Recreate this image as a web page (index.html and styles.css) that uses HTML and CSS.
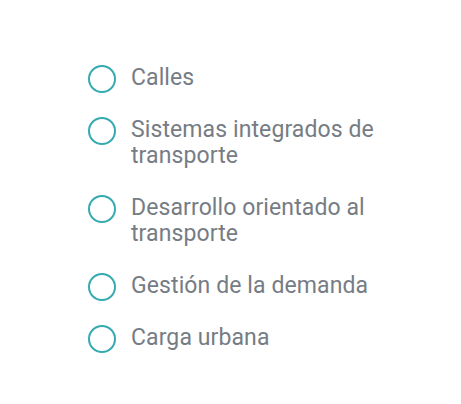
FILE: index.html
```html
<!DOCTYPE html>
<html lang="es">
<head>
<meta charset="utf-8">
<link rel="stylesheet" href="styles.css">
</head>
<body>
<ul class="options">
  <li class="option"><span class="radio"></span><span class="label">Calles</span></li>
  <li class="option"><span class="radio"></span><span class="label">Sistemas integrados de transporte</span></li>
  <li class="option"><span class="radio"></span><span class="label">Desarrollo orientado al transporte</span></li>
  <li class="option"><span class="radio"></span><span class="label">Gestión de la demanda</span></li>
  <li class="option"><span class="radio"></span><span class="label">Carga urbana</span></li>
</ul>
</body>
</html>
```
FILE: styles.css
```css
html, body {
  margin: 0;
  padding: 0;
  background: #ffffff;
}
body {
  min-height: 404px;
  font-family: Roboto, "Noto Sans", sans-serif;
}
.options {
  list-style: none;
  margin: 0;
  padding: 65px 0 40px 88px;
  display: flex;
  flex-direction: column;
  gap: 26px;
}
.option {
  display: flex;
  align-items: flex-start;
  gap: 15px;
}
.radio {
  flex: none;
  box-sizing: border-box;
  width: 28px;
  height: 28px;
  margin: 0 0 -2px;
  border: 2px solid #35aab2;
  border-radius: 50%;
}
.label {
  width: 258px;
  font-size: 23px;
  line-height: 26px;
  letter-spacing: 0.1px;
  color: #767c84;
}
```
